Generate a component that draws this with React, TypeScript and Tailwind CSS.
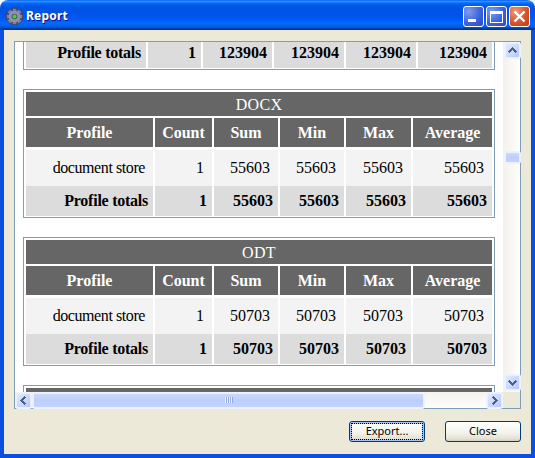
import React from "react";

const W = "grid-cols-[127px_57px_64px_64px_65px_79px]";
const W1 = "grid-cols-[120px_53px_69px_70px_70px_74px]";

function HeaderRow() {
  return (
    <div className={`grid ${W} gap-x-[2px] h-[28px] mb-[4px] text-white font-bold text-[16px] leading-[29px] text-center`}>
      {["Profile", "Count", "Sum", "Min", "Max", "Average"].map((h) => (
        <div key={h} className="bg-[#666666]">{h}</div>
      ))}
    </div>
  );
}

function DataRow({ label, count, v }: { label: string; count: string; v: string }) {
  const cell = "bg-[#f3f3f3] pr-[8px] text-right leading-[36px] text-[16px]";
  return (
    <div className={`grid ${W} gap-x-[2px] h-[34px] mb-[2px] text-black`}>
      <div className={`${cell} tracking-[-0.42px]`}>{label}</div>
      <div className={cell}>{count}</div>
      {[0, 1, 2, 3].map((i) => (
        <div key={i} className={cell}>{v}</div>
      ))}
    </div>
  );
}

function TotalRow({ cols, count, v }: { cols: string; count: string; v: string }) {
  const cell = "bg-[#dcdcdc] pr-[5px] text-right leading-[30px] text-[16px] font-bold";
  return (
    <div className={`grid ${cols} gap-x-[2px] h-[28px] text-black`}>
      <div className={`${cell} tracking-[-0.25px]`}>Profile totals</div>
      <div className={cell}>{count}</div>
      {[0, 1, 2, 3].map((i) => (
        <div key={i} className={cell}>{v}</div>
      ))}
    </div>
  );
}

function Card({ title, v }: { title: string; v: string }) {
  return (
    <div className="border border-[#7f9db9] bg-white pt-[2px] px-[2px] pb-[3px] mb-[19px]">
      <div className="h-[24px] mb-[2px] bg-[#666666] text-white text-center text-[16px] leading-[26px] tracking-[0.3px]">{title}</div>
      <HeaderRow />
      <DataRow label="document store" count="1" v={v} />
      <TotalRow cols={W} count="1" v={v} />
    </div>
  );
}

function Chevron({ dir }: { dir: "up" | "down" | "left" | "right" }) {
  const d = {
    up: "M3 9.5 L7.5 5 L12 9.5",
    down: "M3 5.5 L7.5 10 L12 5.5",
    left: "M9.5 3 L5 7.5 L9.5 12",
    right: "M5.5 3 L10 7.5 L5.5 12",
  }[dir];
  return (
    <svg width="15" height="15" viewBox="0 0 15 15" shapeRendering="crispEdges">
      <path d={d} fill="none" stroke="#4d6185" strokeWidth="2.4" />
    </svg>
  );
}

const scrollBtn =
  "flex items-center justify-center rounded-[2px] border border-[#e8effd] bg-[linear-gradient(135deg,#e1eafe,#c3d3fd_70%,#b4c6f8)] shadow-[0_0_0_1px_#eef2fb]";
const scrollThumb =
  "flex items-center justify-center rounded-[2px] border border-[#e8effd] bg-[linear-gradient(180deg,#c9d8fd,#bccffc_50%,#c3d3fd)] shadow-[0_0_0_1px_#eef2fb]";

function TitleButton({ kind }: { kind: "min" | "max" | "close" }) {
  const bg =
    kind === "close"
      ? "bg-[radial-gradient(circle_at_30%_25%,#eb9a80,#d9542b_55%,#c23a12)]"
      : "bg-[radial-gradient(circle_at_25%_25%,#7d9df0,#3f63dc_55%,#2a48c8)]";
  return (
    <div className={`w-[21px] h-[21px] rounded-[3px] border border-white flex items-center justify-center ${bg}`}>
      <svg width="19" height="19" viewBox="0 0 19 19" shapeRendering="crispEdges">
        {kind === "min" && <rect x="4" y="12" width="8" height="3" fill="#fff" />}
        {kind === "max" && (
          <path d="M3.5 4 H15.5 V15.5 H3.5 Z M3.5 5 H15.5 M3.5 6 H15.5" fill="none" stroke="#fff" strokeWidth="1" />
        )}
        {kind === "close" && (
          <path d="M4.5 4.5 L14.5 14.5 M14.5 4.5 L4.5 14.5" stroke="#fff" strokeWidth="2.4" shapeRendering="auto" />
        )}
      </svg>
    </div>
  );
}

function Gear() {
  const teeth = [0, 45, 90, 135, 180, 225, 270, 315];
  return (
    <svg width="17" height="17" viewBox="0 0 18 18">
      {teeth.map((a) => (
        <rect key={a} x="6.5" y="0.3" width="5" height="4.5" fill="#7f80a0" stroke="#34345c" strokeWidth="0.7" transform={`rotate(${a} 9 9)`} />
      ))}
      <circle cx="9" cy="9" r="6.2" fill="#8f91ad" />
      <circle cx="9" cy="9" r="3" fill="#4b5562" />
      <circle cx="9" cy="9" r="2" fill="#3fd62f" />
    </svg>
  );
}

function XpButton({ label, focused }: { label: string; focused?: boolean }) {
  return (
    <button
      className={`w-[76px] h-[21px] rounded-[3px] border border-[#003c74] p-[1px] bg-[linear-gradient(180deg,#ffffff,#f2f1ea_60%,#e3e0d5_88%,#d3cfc3)] text-black text-[11px] ${
        focused ? "shadow-[inset_0_0_0_2px_#a9c3ee]" : ""
      }`}
      style={{ fontFamily: '"Noto Sans", sans-serif' }}
    >
      <span className={`flex h-full items-center justify-center ${focused ? "border border-dotted border-black" : ""}`}>
        {label}
      </span>
    </button>
  );
}

export default function App() {
  return (
    <div className="w-[535px] h-[458px] bg-white overflow-hidden flex flex-col" style={{ fontFamily: '"Liberation Serif", serif' }}>
      <div
        className="h-[30px] shrink-0 rounded-t-[8px] flex items-center pl-[6px] pr-[5px] pt-[2px] bg-[linear-gradient(180deg,#0058ee_0%,#3593ff_4%,#288eff_6%,#127dff_8%,#036ffc_10%,#0262ee_14%,#0057e5_20%,#0054e3_24%,#0055eb_56%,#005bf5_66%,#026afe_76%,#0062ef_86%,#0052d6_92%,#0040ab_94%,#003092_100%)]"
      >
        <Gear />
        <span
          className="ml-[3px] text-white font-bold text-[12px] tracking-[0.2px] [text-shadow:1px_1px_0_#0f1089]"
          style={{ fontFamily: '"Noto Sans", sans-serif' }}
        >
          Report
        </span>
        <div className="ml-auto flex gap-[2px]">
          <TitleButton kind="min" />
          <TitleButton kind="max" />
          <TitleButton kind="close" />
        </div>
      </div>

      <div className="flex-1 min-h-0 border-x-[4px] border-b-[4px] border-[#0a4fe0] bg-[#ece9d8] flex flex-col pt-[11px] px-[10px]">
        <div className="h-[368px] w-[507px] shrink-0 border border-[#7f9db9] flex flex-col">
          <div className="flex h-[350px] shrink-0">
            <div className="w-[488px] h-full overflow-hidden bg-white px-[8px]">
              <div className="-mt-[7px] border border-[#7f9db9] pt-[2px] px-[2px] pb-[3px] mb-[19px]">
                <TotalRow cols={W1} count="1" v="123904" />
              </div>
              <Card title="DOCX" v="55603" />
              <Card title="ODT" v="50703" />
              <div className="border border-[#7f9db9] pt-[2px] px-[2px]">
                <div className="h-[24px] bg-[#666666]" />
              </div>
            </div>
            <div className="w-[17px] h-full bg-[linear-gradient(90deg,#f3f1ec,#fefefb)] flex flex-col items-center pt-[1px] pb-[2px] pl-[1px]">
              <div className={`${scrollBtn} w-[15px] h-[15px]`}><Chevron dir="up" /></div>
              <div className={`${scrollThumb} w-[15px] h-[11px] mt-[94px]`} />
              <div className={`${scrollBtn} w-[15px] h-[15px] mt-auto`}><Chevron dir="down" /></div>
            </div>
          </div>
          <div className="flex h-[16px] shrink-0">
            <div className="w-[488px] h-full bg-[linear-gradient(180deg,#f3f1ec,#fefefb)] flex items-center gap-[2px] pl-[1px]">
              <div className={`${scrollBtn} w-[15px] h-[15px]`}><Chevron dir="left" /></div>
              <div className={`${scrollThumb} w-[391px] h-[15px] gap-[1px]`}>
                {[0, 1, 2, 3].map((i) => (
                  <span key={i} className="w-[1px] h-[6px] bg-[#eef4fe] shadow-[1px_0_0_#8ca8e0]" />
                ))}
              </div>
              <div className={`${scrollBtn} w-[15px] h-[15px] ml-auto mr-[1px]`}><Chevron dir="right" /></div>
            </div>
            <div className="flex-1 bg-[#ece9d8]" />
          </div>
        </div>
        <div className="flex justify-end gap-[20px] mt-[12px] w-[507px]">
          <XpButton label="Export..." focused />
          <XpButton label="Close" />
        </div>
      </div>
    </div>
  );
}
